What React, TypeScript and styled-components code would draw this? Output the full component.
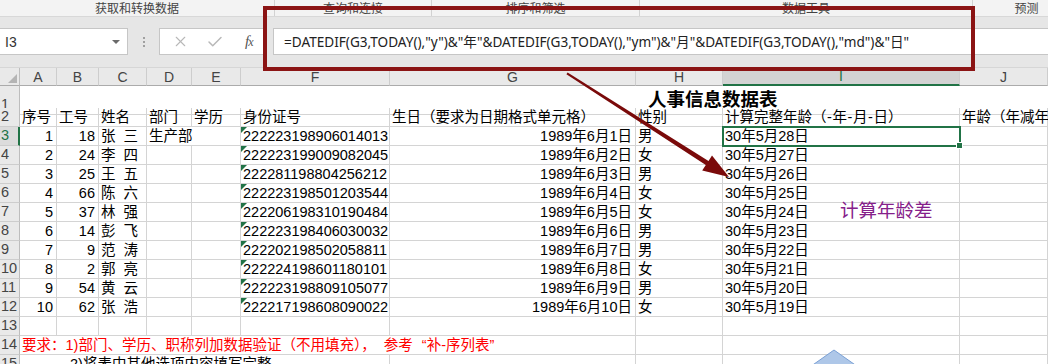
import React from "react";
import styled, { createGlobalStyle } from "styled-components";
import { X, Check } from "lucide-react";

const Global = createGlobalStyle`
  html, body { margin: 0; padding: 0; background: #fff; }
  body {
    width: 1048px; height: 364px; overflow: hidden;
    font-family: "Liberation Sans", "Noto Sans CJK SC", sans-serif;
  }
`;

const COLS = "20px 37px 42px 48px 45px 49px 149px 246px 87px 237px 88px";
const GRID = "#d4d4d4";
const GREEN = "#217346";

const Page = styled.div`
  position: relative;
  width: 1048px;
  height: 364px;
  overflow: hidden;
`;

const Ribbon = styled.div`
  display: flex;
  height: 17px;
  background: #f3f3f3;
  border-bottom: 1px solid #d8d8d8;
  box-sizing: border-box;
`;

const Group = styled.div<{ $w: number }>`
  flex: 0 0 ${(p) => p.$w}px;
  display: flex;
  align-items: center;
  justify-content: center;
  font: 12px/16px "Noto Sans CJK SC", sans-serif;
  color: #444;
  border-right: 1px solid #d2d2d2;
  box-sizing: border-box;
`;

const FormulaArea = styled.div`
  height: 51px;
  background: #e6e6e6;
  padding-top: 11px;
  box-sizing: border-box;
  display: flex;
  align-items: flex-start;
  border-bottom: 1px solid #d6d6d6;
`;

const NameBox = styled.div`
  width: 129px;
  height: 27px;
  margin-left: -1px;
  background: #fff;
  border: 1px solid #c6c6c6;
  box-sizing: border-box;
  display: flex;
  align-items: center;
  justify-content: space-between;
  padding: 0 7px 0 5px;
  font-size: 14px;
  color: #333;
`;

const Caret = styled.span`
  width: 0;
  height: 0;
  border-left: 4px solid transparent;
  border-right: 4px solid transparent;
  border-top: 4px solid #6a6a6a;
`;

const Dots = styled.div`
  width: 31px;
  height: 27px;
  display: flex;
  flex-direction: column;
  align-items: center;
  justify-content: center;
  gap: 2px;
`;

const Dot = styled.span`
  width: 2px;
  height: 2px;
  background: #a0a0a0;
`;

const ButtonBox = styled.div`
  width: 106px;
  height: 27px;
  background: #fff;
  border: 1px solid #c6c6c6;
  box-sizing: border-box;
  display: flex;
  align-items: center;
  padding-left: 12px;
  gap: 17px;
  color: #b8b8b8;
`;

const Fx = styled.span`
  font: italic 15px "Liberation Serif", serif;
  color: #555;
  margin-left: 4px;
  letter-spacing: -1px;
  & > small { font-size: 12px; }
`;

const FormulaInput = styled.div`
  flex: 1;
  margin-left: 8px;
  height: 27px;
  background: #fff;
  border: 1px solid #c6c6c6;
  border-right: none;
  box-sizing: border-box;
  display: flex;
  align-items: center;
  padding: 0 0 2px 10px;
  font: 13.6px "Noto Sans", "Noto Sans CJK SC", sans-serif;
  color: #222;
  white-space: nowrap;
`;

const GridRow = styled.div<{ $h: number }>`
  display: grid;
  grid-template-columns: ${COLS};
  height: ${(p) => p.$h}px;
`;

const Corner = styled.div`
  position: relative;
  background: #e9e9e9;
  border-right: 1px solid #bdbdbd;
  border-bottom: 1px solid #ababab;
  box-sizing: border-box;
  &::after {
    content: "";
    position: absolute;
    right: 2px;
    bottom: 2px;
    width: 0;
    height: 0;
    border-left: 9px solid transparent;
    border-bottom: 9px solid #b4b4b4;
  }
`;

const ColHead = styled.div<{ $active?: boolean }>`
  background: ${(p) => (p.$active ? "#d3d3d3" : "#e9e9e9")};
  border-right: 1px solid #cdcdcd;
  border-bottom: ${(p) => (p.$active ? `2px solid ${GREEN}` : "1px solid #ababab")};
  box-sizing: border-box;
  display: flex;
  align-items: center;
  justify-content: center;
  font-size: 14px;
  color: ${(p) => (p.$active ? GREEN : "#444")};
  line-height: 16px;
`;

const RowHead = styled.div<{ $active?: boolean }>`
  background: ${(p) => (p.$active ? "#dcdcdc" : "#e9e9e9")};
  border-right: ${(p) => (p.$active ? `2px solid ${GREEN}` : "1px solid #bdbdbd")};
  border-bottom: 1px solid #cdcdcd;
  box-sizing: border-box;
  display: flex;
  align-items: flex-end;
  padding: 0 0 1px 1px;
  font-size: 14.5px;
  line-height: 17px;
  color: ${(p) => (p.$active ? GREEN : "#444")};
  overflow: visible;
  white-space: nowrap;
`;

const Cell = styled.div<{
  $align?: "left" | "right";
  $span?: number;
  $color?: string;
  $indent?: number;
  $comment?: boolean;
  $selected?: boolean;
}>`
  position: relative;
  grid-column: span ${(p) => p.$span ?? 1};
  border-right: 1px solid ${GRID};
  border-bottom: 1px solid ${GRID};
  box-sizing: border-box;
  display: flex;
  align-items: flex-end;
  justify-content: ${(p) => (p.$align === "right" ? "flex-end" : "flex-start")};
  padding: 0 3px 0 ${(p) => 2 + (p.$indent ?? 0)}px;
  font-size: 14.5px;
  line-height: 18px;
  color: ${(p) => p.$color ?? "#000"};
  white-space: pre;
  overflow: visible;
  ${(p) =>
    p.$comment &&
    `&::before {
      content: "";
      position: absolute;
      left: 0; top: 0;
      width: 0; height: 0;
      border-top: 6px solid ${GREEN};
      border-right: 6px solid transparent;
    }`}
  ${(p) =>
    p.$selected &&
    `outline: 2px solid ${GREEN};
     outline-offset: -1px;
     z-index: 1;
     &::after {
       content: "";
       position: absolute;
       right: -4px; bottom: -4px;
       width: 5px; height: 5px;
       background: ${GREEN};
       border: 1px solid #fff;
     }`}
`;

const Quote = styled.span<{ $side: "open" | "close" }>`
  display: inline-block;
  width: 14px;
  text-align: ${(p) => (p.$side === "open" ? "right" : "left")};
`;

const Hyphen = styled.span`
  display: inline-block;
  width: 6px;
  text-align: center;
`;

const TitleCell = styled.div`
  grid-column: span 10;
  border-bottom: 1px solid ${GRID};
  box-sizing: border-box;
  display: flex;
  align-items: center;
  padding-left: 628px;
  padding-bottom: 3px;
  font: 700 18.5px "Noto Sans CJK SC", sans-serif;
  color: #000;
  white-space: nowrap;
`;

const Annotation = styled.div`
  position: absolute;
  left: 263px;
  top: 6px;
  width: 712px;
  height: 65px;
  border: 4px solid #8b1414;
  box-sizing: border-box;
  pointer-events: none;
`;

const Overlay = styled.svg`
  position: absolute;
  left: 0;
  top: 0;
  pointer-events: none;
`;

const Note = styled.div`
  position: absolute;
  left: 840px;
  top: 196px;
  font: 18.5px "Noto Sans CJK SC", sans-serif;
  color: #85208a;
  white-space: nowrap;
`;

const headers: React.ReactNode[] = [
  "序号",
  "工号",
  "姓名",
  "部门",
  "学历",
  "身份证号",
  "生日（要求为日期格式单元格）",
  "性别",
  <>
    计算完整年龄（<Hyphen>-</Hyphen>年<Hyphen>-</Hyphen>月<Hyphen>-</Hyphen>日）
  </>,
  "年龄（年减年龄）",
];

const rows = [
  [1, 18, "张  三", "222223198906014013", "1989年6月1日", "男", "30年5月28日"],
  [2, 24, "李  四", "222223199009082045", "1989年6月2日", "女", "30年5月27日"],
  [3, 25, "王  五", "222281198804256212", "1989年6月3日", "男", "30年5月26日"],
  [4, 66, "陈  六", "222223198501203544", "1989年6月4日", "女", "30年5月25日"],
  [5, 37, "林  强", "222206198310190484", "1989年6月5日", "女", "30年5月24日"],
  [6, 14, "彭  飞", "222223198406030032", "1989年6月6日", "男", "30年5月23日"],
  [7, 9, "范  涛", "222202198502058811", "1989年6月7日", "男", "30年5月22日"],
  [8, 2, "郭  亮", "222224198601180101", "1989年6月8日", "女", "30年5月21日"],
  [9, 54, "黄  云", "222223198809105077", "1989年6月9日", "男", "30年5月20日"],
  [10, 62, "张  浩", "222217198608090022", "1989年6月10日", "女", "30年5月19日"],
] as const;

const colLetters = ["A", "B", "C", "D", "E", "F", "G", "H", "I", "J"];

export default function App() {
  return (
    <Page>
      <Global />
      <Ribbon>
        <Group $w={275}>获取和转换数据</Group>
        <Group $w={157}>查询和连接</Group>
        <Group $w={208}>排序和筛选</Group>
        <Group $w={333}>数据工具</Group>
        <Group $w={108}>预测</Group>
      </Ribbon>
      <FormulaArea>
        <NameBox>
          <span>I3</span>
          <Caret />
        </NameBox>
        <Dots>
          <Dot />
          <Dot />
          <Dot />
        </Dots>
        <ButtonBox>
          <X size={17} strokeWidth={1.5} />
          <Check size={18} strokeWidth={2} />
          <Fx>
            f<small>x</small>
          </Fx>
        </ButtonBox>
        <FormulaInput>
          =DATEDIF(G3,TODAY(),"y")&amp;"年"&amp;DATEDIF(G3,TODAY(),"ym")&amp;"月"&amp;DATEDIF(G3,TODAY(),"md")&amp;"日"
        </FormulaInput>
      </FormulaArea>

      <GridRow $h={17}>
        <Corner />
        {colLetters.map((c) => (
          <ColHead key={c} $active={c === "I"}>
            {c}
          </ColHead>
        ))}
      </GridRow>

      <GridRow $h={23}>
        <RowHead>1</RowHead>
        <TitleCell>人事信息数据表</TitleCell>
      </GridRow>

      <GridRow $h={19}>
        <RowHead>2</RowHead>
        {headers.map((h, i) => (
          <Cell key={i}>{h}</Cell>
        ))}
      </GridRow>

      {rows.map((r, i) => {
        const n = i + 3;
        return (
          <GridRow $h={19} key={n}>
            <RowHead $active={n === 3}>{n}</RowHead>
            <Cell $align="right">{r[0]}</Cell>
            <Cell $align="right">{r[1]}</Cell>
            <Cell>{r[2]}</Cell>
            {n === 3 ? (
              <Cell $span={2}>生产部</Cell>
            ) : (
              <>
                <Cell />
                <Cell />
              </>
            )}
            <Cell $comment>{r[3]}</Cell>
            <Cell $align="right">{r[4]}</Cell>
            <Cell>{r[5]}</Cell>
            <Cell $selected={n === 3}>{r[6]}</Cell>
            <Cell />
          </GridRow>
        );
      })}

      <GridRow $h={19}>
        <RowHead>13</RowHead>
        {colLetters.map((c) => (
          <Cell key={c} />
        ))}
      </GridRow>

      <GridRow $h={19}>
        <RowHead>14</RowHead>
        <Cell $span={7} $color="#ff0000">
          要求：1)部门、学历、职称列加数据验证（不用填充），  参考<Quote $side="open">“</Quote>补-序列表
          <Quote $side="close">”</Quote>
        </Cell>
        <Cell />
        <Cell />
        <Cell />
      </GridRow>

      <GridRow $h={19}>
        <RowHead>15</RowHead>
        <Cell $span={6} $indent={48}>
          2)将表中其他选项内容填写完整
        </Cell>
        <Cell />
        <Cell />
        <Cell />
        <Cell />
      </GridRow>

      <Annotation />
      <Note>计算年龄差</Note>
      <Overlay width={1048} height={364} viewBox="0 0 1048 364">
        <polygon
          points="567.6,72.4 708.5,160.9 712,155.4 729,177 702.2,170.6 705.8,165.1 566.4,74.2"
          fill="#7a0a0a"
        />
        <polygon points="834,350 807,369 861,369" fill="#aec7e8" stroke="#7aa0d4" strokeWidth={1} />
      </Overlay>
    </Page>
  );
}
